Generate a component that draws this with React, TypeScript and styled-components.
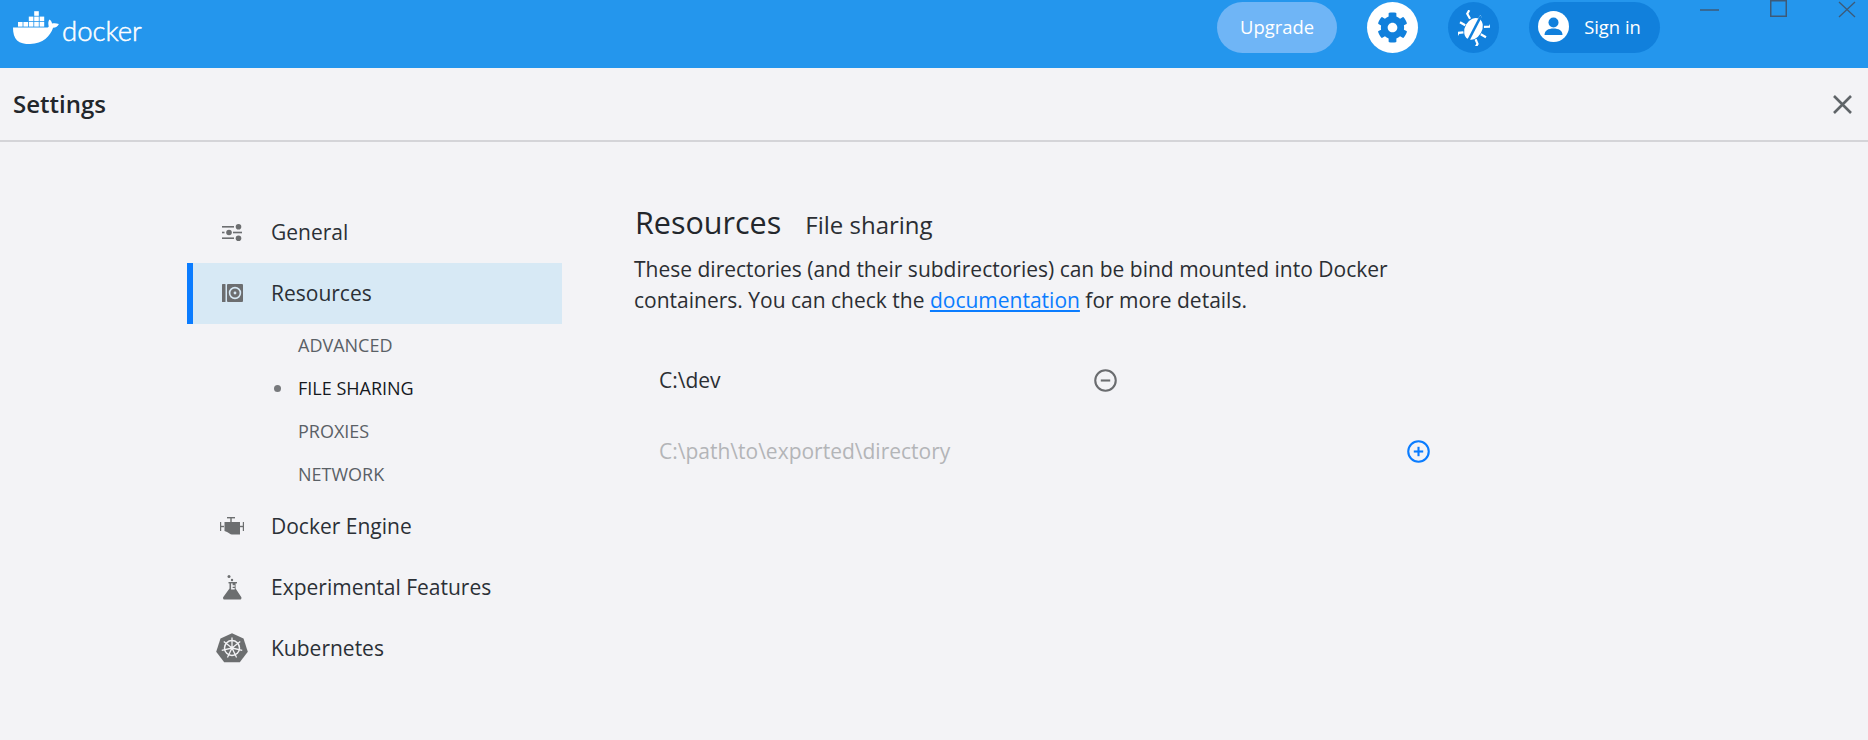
import React from "react";
import styled, { createGlobalStyle } from "styled-components";
import { FaCog } from "react-icons/fa";

const GlobalStyle = createGlobalStyle`
  html, body {
    margin: 0;
    padding: 0;
    height: 100%;
    overflow: hidden;
    background: #f3f3f6;
    font-family: "Open Sans", "Liberation Sans", sans-serif;
  }
`;

const TopBar = styled.header`
  display: flex;
  align-items: flex-start;
  height: 68px;
  background: #2496ed;
  padding-left: 13px;
`;

const Logo = styled.div`
  display: flex;
  align-items: flex-start;
  padding-top: 10px;
  flex: 1;
`;

const Wordmark = styled.span`
  font-family: "Lato", sans-serif;
  font-size: 27.5px;
  font-weight: 300;
  line-height: 42px;
  color: #fff;
  margin-left: 1px;
  -webkit-text-stroke: 0.5px #fff;
`;

const Actions = styled.div`
  display: flex;
  align-items: center;
  padding-top: 2px;
`;

const Pill = styled.button<{ $tone: "light" | "dark"; $width: number; $after: number }>`
  display: flex;
  align-items: center;
  justify-content: center;
  gap: 15px;
  width: ${(p) => p.$width}px;
  height: 51px;
  margin-right: ${(p) => p.$after}px;
  padding: ${(p) => (p.$tone === "dark" ? "0 10px 2px 0" : "0 0 2px")};
  border: none;
  border-radius: 26px;
  background: ${(p) => (p.$tone === "light" ? "#6fb5f6" : "#1180dc")};
  color: #fff;
  font: 400 18.4px "Open Sans", sans-serif;
`;

const RoundButton = styled.button<{ $white?: boolean; $after: number }>`
  display: flex;
  align-items: center;
  justify-content: center;
  width: 51px;
  height: 51px;
  margin-right: ${(p) => p.$after}px;
  padding: 0;
  border: none;
  border-radius: 50%;
  background: ${(p) => (p.$white ? "#fff" : "#1180dc")};
  color: ${(p) => (p.$white ? "#1180dc" : "#fff")};
`;

const WindowControls = styled.div`
  display: flex;
  align-items: flex-start;
  margin-left: 40px;
  margin-right: 12px;
  gap: 51px;
  color: #3d5a78;
`;

const SettingsBar = styled.div`
  display: flex;
  align-items: center;
  justify-content: space-between;
  height: 72px;
  padding: 0 16px 0 13px;
  border-bottom: 2px solid #d4d4d8;
`;

const SettingsTitle = styled.h1`
  margin: 0 0 2px;
  font-size: 24px;
  font-weight: 600;
  color: #22262b;
`;

const CloseIcon = styled.svg`
  display: block;
  color: #5f6468;
`;

const Body = styled.main`
  display: flex;
  padding: 60px 0 0 187px;
`;

const Sidebar = styled.nav`
  width: 375px;
  margin-right: 73px;
  flex: none;
`;

const NavRow = styled.div<{ $active?: boolean }>`
  display: flex;
  align-items: center;
  height: 61px;
  box-sizing: border-box;
  padding-left: ${(p) => (p.$active ? "13px" : "19px")};
  padding-bottom: 1px;
  border-left: ${(p) => (p.$active ? "6px solid #0a7cff" : "none")};
  background: ${(p) => (p.$active ? "#d7e9f5" : "transparent")};
  font-size: 21px;
  color: #2b3036;
`;

const NavIcon = styled.span`
  display: flex;
  align-items: center;
  justify-content: center;
  width: 52px;
  margin-right: 13px;
  color: #6c6e70;
`;

const SubRow = styled.div<{ $current?: boolean }>`
  position: relative;
  display: flex;
  align-items: center;
  box-sizing: border-box;
  height: 43px;
  padding: 0 0 1px 111px;
  font-size: 18px;
  color: ${(p) => (p.$current ? "#15191e" : "#5a6066")};

  ${(p) =>
    p.$current &&
    `&::before {
      content: "";
      position: absolute;
      left: 87px;
      top: 18px;
      width: 7px;
      height: 7px;
      border-radius: 50%;
      background: #77797c;
    }`}
`;

const Content = styled.section`
  width: 790px;
  color: #2b2e33;
`;

const Heading = styled.div`
  display: flex;
  align-items: baseline;
  gap: 24px;
  height: 42px;
`;

const HeadingMain = styled.h2`
  margin: 0;
  font-size: 30.5px;
  font-weight: 400;
  line-height: 41px;
  color: #23272c;
`;

const HeadingSub = styled.span`
  font-size: 24px;
  color: #2b2e33;
`;

const Paragraph = styled.p`
  margin: 10px 0 0 -1px;
  font-size: 21px;
  line-height: 31px;
`;

const DocLink = styled.a`
  color: #0a7cff;
  text-decoration: underline;
`;

const PathRow = styled.div<{ $width: number; $top: number }>`
  display: flex;
  align-items: center;
  justify-content: space-between;
  width: ${(p) => p.$width}px;
  height: 40px;
  margin-top: ${(p) => p.$top}px;
  padding-left: 24px;
  font-size: 21px;
`;

const Placeholder = styled.span`
  color: #b3b5b8;
`;

const Dev = styled.span`
  color: #2b2e33;
`;

function WhaleLogo() {
  const boxes = [
    [18, 21], [23.4, 21], [28.8, 21], [34.2, 21], [39.6, 21],
    [28.8, 15.6], [34.2, 15.6], [39.6, 15.6],
    [34.2, 10.2],
  ];
  return (
    <svg width="48" height="36" viewBox="13 9 48 36" fill="#fff" style={{ display: "block" }}>
      {boxes.map(([x, y]) => (
        <rect key={`${x}-${y}`} x={x} y={y} width="4.6" height="4.6" />
      ))}
      <path d="M13 26.4h34.6c1 0 1.2-.6 1-1.7-.4-2-.6-3.8.8-6.2 1.6 1 2.4 2.4 2.6 4 2-.5 4.4-.5 6.9.6-1 2.4-3 3.6-5.8 3.7-3 8.5-10 16.2-23 16.2-5.5 0-10-1-13-3.6-3-2.8-4.1-7.4-4.1-13z" />
    </svg>
  );
}

function BugIcon() {
  return (
    <svg width="32" height="36" viewBox="0 0 32 36" fill="none" stroke="#fff" strokeWidth="2.2">
      <g transform="rotate(30 16 18)">
        <ellipse cx="16" cy="19" rx="8.5" ry="11.5" fill="#fff" stroke="none" />
        <path d="M16 4v5M8 12L3 9V5M24 12l5-3V5M7 20H1M25 20h6M9 27l-4 3v5M23 27l4 3v5" />
      </g>
      <path d="M23 6L10 31" stroke="#1180dc" strokeWidth="2.6" />
    </svg>
  );
}

function UserBadge() {
  return (
    <svg width="31" height="31" viewBox="0 0 31 31">
      <circle cx="15.5" cy="15.5" r="15.5" fill="#fff" />
      <circle cx="15.5" cy="11.5" r="5" fill="#1180dc" />
      <path d="M6.5 24c0-4.5 4-6.5 9-6.5s9 2 9 6.500z" fill="#1180dc" />
    </svg>
  );
}

function SlidersIcon() {
  return (
    <svg width="20" height="17" viewBox="0 0 20 17" fill="currentColor">
      <rect x="0" y="2" width="12" height="1.6" />
      <circle cx="16.5" cy="2.8" r="2.8" />
      <rect x="0" y="7.7" width="2.5" height="1.6" />
      <circle cx="7" cy="8.5" r="2.8" />
      <rect x="11" y="7.7" width="9" height="1.6" />
      <rect x="0" y="13.4" width="12" height="1.6" />
      <circle cx="16.5" cy="14.2" r="2.8" />
    </svg>
  );
}

function DiskIcon() {
  return (
    <svg width="21" height="18" viewBox="0 0 21 18" fill="currentColor">
      <rect x="0" y="0" width="3.5" height="18" rx="0.6" />
      <rect x="5" y="0" width="16" height="18" rx="1" />
      <circle cx="13" cy="9" r="5.4" fill="none" stroke="#d7e9f5" strokeWidth="1.6" />
      <circle cx="13" cy="9" r="1.4" fill="#d7e9f5" />
    </svg>
  );
}

function EngineIcon() {
  return (
    <svg width="24" height="18" viewBox="0 0 24 18" fill="currentColor">
      <rect x="7" y="0" width="8" height="1.4" />
      <rect x="10.3" y="1" width="1.4" height="4" />
      <rect x="0" y="5" width="1.2" height="9" />
      <rect x="1" y="8.8" width="3" height="1.4" />
      <path d="M4.5 5h15.5v12.5h-8c-2 0-3-2-5-2.6l-2.500-1z" />
      <rect x="20" y="8.8" width="3" height="1.4" />
      <rect x="22.8" y="5" width="1.200" height="9" />
    </svg>
  );
}

function FlaskIcon() {
  return (
    <svg width="19" height="25" viewBox="0 0 19 25" fill="currentColor">
      <circle cx="6" cy="1.500" r="1.500" />
      <circle cx="9" cy="5" r="1.200" />
      <rect x="5.500" y="7" width="8.500" height="1.400" />
      <path d="M6.500 8h1.600v6.500h3.600v-1.400h-2.100v-1.400h2.100v-1.400h-2.100V8h3v5.500l5.600 8.500c.7 1.200 0 2.600-1.400 2.600H1.700c-1.400 0-2.100-1.400-1.400-2.600l6.200-8.500z" />
    </svg>
  );
}

function KubeIcon() {
  const spokes = [0, 51.4, 102.8, 154.3, 205.7, 257.1, 308.6];
  return (
    <svg width="32" height="30" viewBox="0 0 32 30">
      <path d="M16 .2l11.500 5.300 4.300 13.300-8 10.500H8.200l-8-10.500L4.500 5.500z" fill="currentColor" />
      <circle cx="16" cy="15" r="7.500" fill="none" stroke="#f3f3f6" strokeWidth="1.500" />
      <circle cx="16" cy="15" r="1.800" fill="#f3f3f6" />
      {spokes.map((a) => (
        <line key={a} x1="16" y1="15" x2="16" y2="4.500" stroke="#f3f3f6" strokeWidth="1.300" transform={`rotate(${a} 16 15)`} />
      ))}
    </svg>
  );
}

function CircleAction({ kind }: { kind: "add" | "remove" }) {
  const color = kind === "add" ? "#0a7cff" : "#6a6c6f";
  return (
    <svg width="23" height="23" viewBox="0 0 22 22" fill="none" stroke={color} strokeWidth="2">
      <circle cx="11" cy="11" r="9.800" />
      <path d="M6.500 11h9" />
      {kind === "add" && <path d="M11 6.500v9" />}
    </svg>
  );
}

export default function App() {
  return (
    <>
      <GlobalStyle />
      <TopBar>
        <Logo>
          <WhaleLogo />
          <Wordmark>docker</Wordmark>
        </Logo>
        <Actions>
          <Pill $tone="light" $width={120} $after={30}>Upgrade</Pill>
          <RoundButton $white $after={30}>
            <FaCog size={31} />
          </RoundButton>
          <RoundButton $after={30}>
            <BugIcon />
          </RoundButton>
          <Pill $tone="dark" $width={131} $after={0}>
            <UserBadge />
            Sign in
          </Pill>
        </Actions>
        <WindowControls>
          <svg width="19" height="18" viewBox="0 0 19 18" stroke="currentColor" strokeWidth="1.500" fill="none">
            <path d="M0 10h19" />
          </svg>
          <svg width="17" height="17" viewBox="0 0 17 17" stroke="currentColor" strokeWidth="1.500" fill="none">
            <rect x=".75" y=".75" width="15.500" height="15.500" />
          </svg>
          <svg width="18" height="18" viewBox="0 0 18 18" stroke="currentColor" strokeWidth="1.300" fill="none">
            <path d="M1 2l16 15M17 2L1 17" />
          </svg>
        </WindowControls>
      </TopBar>

      <SettingsBar>
        <SettingsTitle>Settings</SettingsTitle>
        <CloseIcon width="19" height="19" viewBox="0 0 19 19" stroke="currentColor" strokeWidth="2.600" fill="none">
          <path d="M1 1l17 17M18 1L1 18" />
        </CloseIcon>
      </SettingsBar>

      <Body>
        <Sidebar>
          <NavRow>
            <NavIcon><SlidersIcon /></NavIcon>General
          </NavRow>
          <NavRow $active>
            <NavIcon><DiskIcon /></NavIcon>Resources
          </NavRow>
          <SubRow>ADVANCED</SubRow>
          <SubRow $current>FILE SHARING</SubRow>
          <SubRow>PROXIES</SubRow>
          <SubRow>NETWORK</SubRow>
          <NavRow>
            <NavIcon><EngineIcon /></NavIcon>Docker Engine
          </NavRow>
          <NavRow>
            <NavIcon><FlaskIcon /></NavIcon>Experimental Features
          </NavRow>
          <NavRow>
            <NavIcon><KubeIcon /></NavIcon>Kubernetes
          </NavRow>
        </Sidebar>

        <Content>
          <Heading>
            <HeadingMain>Resources</HeadingMain>
            <HeadingSub>File sharing</HeadingSub>
          </Heading>
          <Paragraph>
            These directories (and their subdirectories) can be bind mounted into Docker
            containers. You can check the <DocLink href="#">documentation</DocLink> for more details.
          </Paragraph>
          <PathRow $width={458} $top={44}>
            <Dev>C:\dev</Dev>
            <CircleAction kind="remove" />
          </PathRow>
          <PathRow $width={771} $top={31}>
            <Placeholder>C:\path\to\exported\directory</Placeholder>
            <CircleAction kind="add" />
          </PathRow>
        </Content>
      </Body>
    </>
  );
}
